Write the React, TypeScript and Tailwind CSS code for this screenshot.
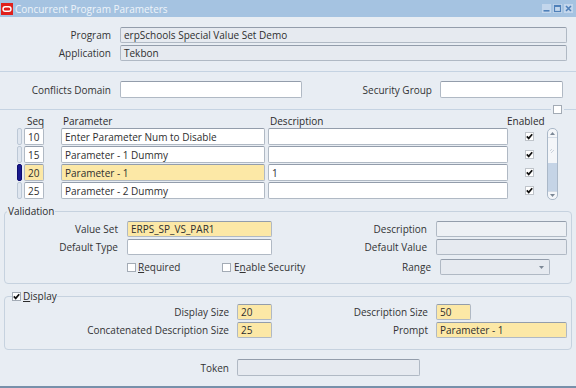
import React from 'react';

type Tone = 'white' | 'ro' | 'yellow';

const toneCls: Record<Tone, string> = {
  white: 'bg-white',
  ro: 'bg-[#e6eaf0]',
  yellow: 'bg-[#fce8a6]',
};

function Field({
  className = '',
  tone = 'white',
  children,
}: {
  className?: string;
  tone?: Tone;
  children?: React.ReactNode;
}) {
  return (
    <div
      className={`flex shrink-0 items-center overflow-hidden whitespace-nowrap rounded-[2px] border border-[#b0b9c4] border-t-[#939dab] pl-[3px] text-[#2e2e2e] ${toneCls[tone]} ${className}`}
    >
      {children}
    </div>
  );
}

function Check({ checked = false, className = '' }: { checked?: boolean; className?: string }) {
  return (
    <span
      className={`flex h-[9px] w-[9px] shrink-0 items-center justify-center border border-[#a3abb5] bg-white ${className}`}
    >
      {checked && (
        <svg width="7" height="7" viewBox="0 0 7 7">
          <path d="M0.8 3.4 L2.7 5.4 L6.2 1.2" stroke="#111" strokeWidth="1.7" fill="none" />
        </svg>
      )}
    </span>
  );
}

function Label({ className = '', children }: { className?: string; children: React.ReactNode }) {
  return <div className={`shrink-0 whitespace-nowrap text-right text-[#333] ${className}`}>{children}</div>;
}

function TitleBar() {
  return (
    <div className="flex h-[17px] shrink-0 items-center bg-[#a5c3e1] pl-[1px] pr-[3px]">
      <svg width="12" height="12" viewBox="0 0 12 12">
        <rect width="12" height="12" fill="#e0201b" />
        <rect x="2" y="3.8" width="8" height="4.4" rx="2.2" fill="none" stroke="#fff" strokeWidth="1.4" />
      </svg>
      <span className="ml-[2px] text-[10px] leading-[12px] text-[#eef4fa]">Concurrent Program Parameters</span>
      <div className="ml-auto flex items-center gap-[2px]">
        <svg width="9" height="9" viewBox="0 0 9 9">
          <rect width="9" height="9" fill="#c3d6ec" />
          <rect x="1.5" y="6" width="6" height="1.6" fill="#4f80b9" />
        </svg>
        <svg width="9" height="9" viewBox="0 0 9 9">
          <rect width="9" height="9" fill="#c3d6ec" />
          <rect x="1.5" y="1.5" width="6" height="6" fill="none" stroke="#4f80b9" strokeWidth="1.2" />
          <rect x="1.5" y="1.5" width="6" height="1.5" fill="#4f80b9" />
        </svg>
        <svg width="9" height="9" viewBox="0 0 9 9">
          <rect width="9" height="9" fill="#c3d6ec" />
          <path d="M2 2 L7 7 M7 2 L2 7" stroke="#4f80b9" strokeWidth="1.6" />
        </svg>
      </div>
    </div>
  );
}

const rows = [
  { seq: '10', name: 'Enter Parameter Num to Disable', desc: '' },
  { seq: '15', name: 'Parameter - 1 Dummy', desc: '' },
  { seq: '20', name: 'Parameter - 1', desc: '1', active: true },
  { seq: '25', name: 'Parameter - 2 Dummy', desc: '' },
];

function ScrollBar() {
  return (
    <div className="ml-[13px] flex h-[72px] w-[11px] flex-col overflow-hidden rounded-[5px] border border-[#aab8c8] bg-[#f4f6f9]">
      <div className="flex h-[9px] items-center justify-center border-b border-[#d3dbe5]">
        <svg width="5" height="3" viewBox="0 0 5 3">
          <path d="M0 3 L2.5 0 L5 3 Z" fill="#7c8896" />
        </svg>
      </div>
      <div className="flex h-[25px] items-center justify-center">
        <svg width="5" height="6" viewBox="0 0 5 6">
          <path d="M1 5 L4 2 M0 3 L2 1" stroke="#c2cad4" strokeWidth="0.8" />
        </svg>
      </div>
      <div className="flex-1 bg-[#c5d4e6]" />
      <div className="flex h-[8px] items-center justify-center border-t border-[#d3dbe5]">
        <svg width="5" height="3" viewBox="0 0 5 3">
          <path d="M0 0 L2.5 3 L5 0 Z" fill="#7c8896" />
        </svg>
      </div>
    </div>
  );
}

export default function App() {
  return (
    <div className="flex h-[388px] w-[576px] flex-col overflow-hidden bg-[#e8edf3] font-['Open_Sans',sans-serif] text-[10px] leading-[12px]">
      <TitleBar />

      <div className="flex flex-col gap-[2px] pt-[10px]">
        <div className="flex h-[16px] items-center">
          <Label className="w-[111px]">Program</Label>
          <Field tone="ro" className="ml-[9px] h-[16px] w-[447px]">erpSchools Special Value Set Demo</Field>
        </div>
        <div className="flex h-[16px] items-center">
          <Label className="w-[111px]">Application</Label>
          <Field tone="ro" className="ml-[9px] h-[16px] w-[447px]">Tekbon</Field>
        </div>
      </div>

      <div className="mt-[10px] h-px shrink-0 bg-[#c5d3e2]" />

      <div className="mt-[9px] flex h-[17px] items-center">
        <Label className="w-[111px]">Conflicts Domain</Label>
        <Field className="ml-[9px] h-[17px] w-[182px]" />
        <Label className="w-[130px]">Security Group</Label>
        <Field className="ml-[8px] h-[17px] w-[123px]" />
      </div>

      <div className="mt-[7px] flex h-[9px] shrink-0 items-center">
        <div className="h-px flex-1 bg-[#c5d3e2]" />
        <Check className="mx-[2px]" />
        <div className="h-px w-[12px] bg-[#c5d3e2]" />
      </div>

      <div className="flex h-[13px] items-center pl-[24px] text-[#2b2b2b]">
        <div className="w-[20px] pl-[3px]">Seq</div>
        <div className="ml-[17px] w-[204px] pl-[2px]">Parameter</div>
        <div className="ml-[3px] w-[240px] pl-[2px]">Description</div>
        <div className="-ml-px">Enabled</div>
      </div>

      <div className="mt-px flex items-start pl-[17px]">
        <div className="flex flex-col gap-px">
          {rows.map((r) => (
            <div key={r.seq} className="flex h-[17px] items-center">
              <div
                className={`h-[17px] w-[5px] rounded-[2px] border ${
                  r.active ? 'border-[#0d0d6e] bg-[#1a1a8e]' : 'border-[#bcc8d6] bg-[#dfe6ef]'
                }`}
              />
              <Field tone={r.active ? 'yellow' : 'white'} className="ml-[2px] h-[17px] w-[20px]">
                {r.seq}
              </Field>
              <Field tone={r.active ? 'yellow' : 'white'} className="ml-[17px] h-[17px] w-[204px]">
                {r.name}
              </Field>
              <Field className="ml-[3px] h-[17px] w-[240px]">{r.desc}</Field>
              <Check checked className="ml-[17px] border-[#bfc4ca] bg-[#f1f2f4]" />
            </div>
          ))}
        </div>
        <ScrollBar />
      </div>

      <fieldset className="mt-[5px] ml-[4px] w-[568px] rounded-[4px] border border-[#c6d2df] pt-[4px] pb-[8px]">
        <legend className="ml-[2px] px-[1px] text-[#2b2b2b]">Validation</legend>
        <div className="flex flex-col gap-[2px]">
          <div className="flex h-[16px] items-center">
            <Label className="w-[113px]">Value Set</Label>
            <Field tone="yellow" className="ml-[9px] h-[16px] w-[145px]">ERPS_SP_VS_PAR1</Field>
            <Label className="w-[155px]">Description</Label>
            <Field className="ml-[9px] h-[16px] w-[131px] bg-[#edf0f4]" tone="ro" />
          </div>
          <div className="flex h-[16px] items-center">
            <Label className="w-[113px]">Default Type</Label>
            <Field className="ml-[9px] h-[16px] w-[145px]" />
            <Label className="w-[155px]">Default Value</Label>
            <Field className="ml-[9px] h-[16px] w-[131px]" tone="ro" />
          </div>
          <div className="mt-[2px] flex h-[16px] items-center">
            <div className="w-[122px] shrink-0" />
            <div className="flex w-[95px] shrink-0 items-center">
              <Check />
              <span className="ml-[2px] text-[#333]">
                <span className="underline">R</span>equired
              </span>
            </div>
            <div className="flex items-center">
              <Check />
              <span className="ml-[3px] text-[#333]">
                E<span className="underline">n</span>able Security
              </span>
            </div>
            <Label className="flex-1">Range</Label>
            <Field className="relative ml-[9px] h-[16px] w-[110px] justify-end pr-[5px]" tone="ro">
              <svg width="5" height="3" viewBox="0 0 5 3">
                <path d="M0 0 L2.5 3 L5 0 Z" fill="#7c8896" />
              </svg>
            </Field>
            <div className="w-[21px] shrink-0" />
          </div>
        </div>
      </fieldset>

      <fieldset className="mt-[6px] ml-[4px] w-[568px] rounded-[4px] border border-[#c6d2df] pt-[2px] pb-[11px]">
        <legend className="ml-[7px] flex items-center text-[#2b2b2b]">
          <Check checked />
          <span className="ml-[2px]">
            <span className="underline">D</span>isplay
          </span>
        </legend>
        <div className="flex flex-col gap-[2px]">
          <div className="flex h-[16px] items-center">
            <Label className="w-[224px]">Display Size</Label>
            <Field tone="yellow" className="ml-[8px] h-[16px] w-[35px]">20</Field>
            <Label className="w-[156px]">Description Size</Label>
            <Field tone="yellow" className="ml-[8px] h-[16px] w-[35px]">50</Field>
          </div>
          <div className="flex h-[16px] items-center">
            <Label className="w-[224px]">Concatenated Description Size</Label>
            <Field tone="yellow" className="ml-[8px] h-[16px] w-[35px]">25</Field>
            <Label className="w-[156px]">Prompt</Label>
            <Field tone="yellow" className="ml-[8px] h-[16px] w-[131px]">Parameter - 1</Field>
          </div>
        </div>
      </fieldset>

      <div className="mt-[9px] flex h-[17px] items-center">
        <Label className="w-[229px]">Token</Label>
        <Field tone="ro" className="ml-[8px] h-[17px] w-[183px]" />
      </div>

      <div className="mt-auto h-[2px] shrink-0 bg-[#7890aa]" />
    </div>
  );
}
